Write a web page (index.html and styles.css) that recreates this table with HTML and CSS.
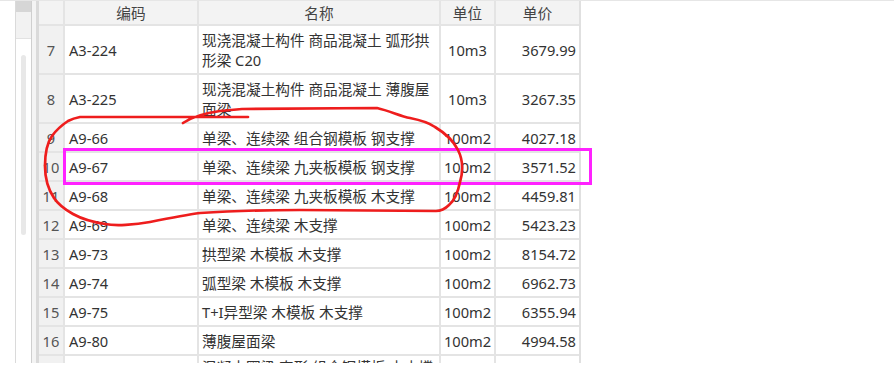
FILE: index.html
```html
<!DOCTYPE html>
<html lang="zh-CN">
<head>
<meta charset="utf-8">
<title>定额列表</title>
<link rel="stylesheet" href="styles.css">
</head>
<body>
<div class="screen">
  <div class="gutter"></div>
  <div class="sidepanel">
    <div class="sp-top"></div>
    <div class="sp-title"></div>
    <div class="sp-body"><div class="thumb"></div></div>
  </div>
  <div class="divider"></div>
  <div class="grid">
    <div class="hd"></div><div class="hd">编码</div><div class="hd">名称</div><div class="hd">单位</div><div class="hd">单价</div>

    <div class="no">7</div><div class="code">A3-224</div><div class="name">现浇混凝土构件 商品混凝土 弧形拱<br>形梁 C20</div><div class="unit">10m3</div><div class="price">3679.99</div>
    <div class="no">8</div><div class="code">A3-225</div><div class="name">现浇混凝土构件 商品混凝土 薄腹屋<br>面梁</div><div class="unit">10m3</div><div class="price">3267.35</div>
    <div class="no">9</div><div class="code">A9-66</div><div class="name">单梁、连续梁 组合钢模板 钢支撑</div><div class="unit">100m2</div><div class="price">4027.18</div>
    <div class="no">10</div><div class="code">A9-67</div><div class="name">单梁、连续梁 九夹板模板 钢支撑</div><div class="unit">100m2</div><div class="price">3571.52</div>
    <div class="no">11</div><div class="code">A9-68</div><div class="name">单梁、连续梁 九夹板模板 木支撑</div><div class="unit">100m2</div><div class="price">4459.81</div>
    <div class="no">12</div><div class="code">A9-69</div><div class="name">单梁、连续梁 木支撑</div><div class="unit">100m2</div><div class="price">5423.23</div>
    <div class="no">13</div><div class="code">A9-73</div><div class="name">拱型梁 木模板 木支撑</div><div class="unit">100m2</div><div class="price">8154.72</div>
    <div class="no">14</div><div class="code">A9-74</div><div class="name">弧型梁 木模板 木支撑</div><div class="unit">100m2</div><div class="price">6962.73</div>
    <div class="no">15</div><div class="code">A9-75</div><div class="name">T+I异型梁 木模板 木支撑</div><div class="unit">100m2</div><div class="price">6355.94</div>
    <div class="no">16</div><div class="code">A9-80</div><div class="name">薄腹屋面梁</div><div class="unit">100m2</div><div class="price">4994.58</div>
    <div class="no">17</div><div class="code">A9-81</div><div class="name name-top">混凝土圈梁 直形 组合钢模板 木支撑<br>撑</div><div class="unit">100m2</div><div class="price">3862.15</div>
  </div>
  <div class="rest"></div>
</div>

<div class="highlight"></div>

<svg class="ink" width="894" height="392" viewBox="0 0 894 392" aria-hidden="true">
  <path d="M183,123 C192,117 205,113 220,111 L242,109 L377,108 C390,111 400,116 410,118 C420,120 428,122 435,127 C445,133 453,140 458,150 C463,160 463,172 460,182 C458,192 455,200 449,205 C445,209 441,211 436,211 L300,210 C260,210 230,211 200,213 C185,215 170,218 150,222 C135,225 115,226 105,224 C92,222 82,219 73,214 C64,209 58,204 54,198 C48,189 45,178 45,166 C45,152 47,143 52,136 C57,129 62,125 68,121 C72,119 75,118 80,117 L248,117"/>
</svg>
</body>
</html>
```

FILE: styles.css
```css
html, body {
  margin: 0;
  padding: 0;
  background: #ffffff;
}

body {
  width: 894px;
  height: 392px;
  position: relative;
  overflow: hidden;
  font-family: "Noto Sans", "Noto Sans CJK SC", sans-serif;
  font-size: 14.67px;
  color: #333333;
}

.screen {
  display: flex;
  height: 363px;
  overflow: hidden;
  border-top: 1px solid #e6e6e6;
  box-sizing: border-box;
}

.gutter {
  width: 15px;
  flex: none;
  border-right: 1px solid #dadada;
  background: #ffffff;
}

.sidepanel {
  width: 15px;
  flex: none;
  display: flex;
  flex-direction: column;
}

.sp-top {
  height: 11px;
  background: #d6d6d6;
}

.sp-title {
  height: 26px;
  background: #f2f2f2;
  border-bottom: 1px solid #e2e2e2;
}

.sp-body {
  flex: 1;
  background: #ffffff;
  padding: 16px 0 0 5px;
}

.thumb {
  width: 5px;
  height: 180px;
  border-radius: 3px;
  background: #e8e8e8;
}

.divider {
  width: 4px;
  flex: none;
  border-left: 1px solid #cfcfcf;
  border-right: 3px solid #dadada;
  background: #f4f4f4;
}

.grid {
  flex: none;
  display: grid;
  grid-template-columns: 24px 132px 240px 53px 83px;
  grid-template-rows: 23px 47px 47px repeat(8, 27px) 47px;
  gap: 2px;
  background: #e4e4e4;
  border-right: 2px solid #e0e0e0;
  align-content: start;
}

.grid > div {
  background: #ffffff;
  display: flex;
  align-items: center;
  white-space: nowrap;
  overflow: hidden;
  line-height: 20px;
}

.grid > .hd {
  background: #f3f3f3;
  justify-content: center;
  color: #444444;
}

.grid > .no {
  background: #f1f1f1;
  justify-content: center;
  color: #555555;
}

.grid > .code {
  padding-left: 4px;
}

.grid > .name {
  padding-left: 3px;
}

.grid > .name-top {
  align-items: flex-start;
  padding-top: 1px;
}

.grid > .unit {
  justify-content: center;
}

.grid > .price {
  justify-content: flex-end;
  padding-right: 3px;
}

.rest {
  flex: 1;
  background: #ffffff;
}

.highlight {
  position: absolute;
  left: 63px;
  top: 148px;
  width: 529px;
  height: 37px;
  box-sizing: border-box;
  border: 3px solid #ff22ff;
}

.ink {
  position: absolute;
  left: 0;
  top: 0;
  pointer-events: none;
}

.ink path {
  fill: none;
  stroke: #ee1d1d;
  stroke-width: 2.7;
  stroke-linecap: round;
  stroke-linejoin: round;
}
```
